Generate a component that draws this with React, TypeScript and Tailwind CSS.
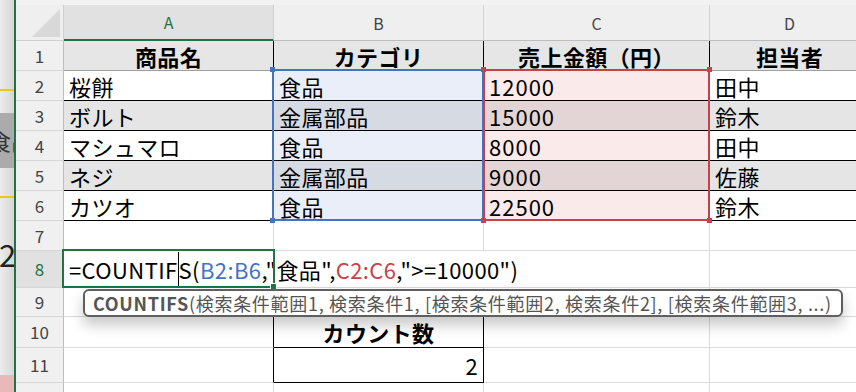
import type { ReactNode } from "react";

const colW = ["w-[210px]", "w-[210px]", "w-[226px]", "w-[160px]"];

const items = [
  { name: "桜餅", cat: "食品", amt: "12000", who: "田中" },
  { name: "ボルト", cat: "金属部品", amt: "15000", who: "鈴木" },
  { name: "マシュマロ", cat: "食品", amt: "8000", who: "田中" },
  { name: "ネジ", cat: "金属部品", amt: "9000", who: "佐藤" },
  { name: "カツオ", cat: "食品", amt: "22500", who: "鈴木" },
];

type CellSpec = { text?: ReactNode; cls: string };

const GRID = "bg-white border-r-[#dadada] border-b-[#dadada]";

function RowHead({ n, active }: { n: number; active?: boolean }) {
  return (
    <div
      className={`w-[48px] shrink-0 flex items-center justify-center border-r border-b border-r-[#bdbdbd] border-b-[#d6d6d6] text-[17px] leading-[20px] tracking-normal ${
        active ? "bg-[#e1e1e1] text-[#217346]" : "bg-[#f0f0f0] text-[#444]"
      }`}
    >
      {n}
    </div>
  );
}

function Row({ n, h, cells, active }: { n: number; h: string; cells: CellSpec[]; active?: boolean }) {
  return (
    <div className={`flex shrink-0 ${h}`}>
      <RowHead n={n} active={active} />
      {cells.map((c, i) => (
        <div
          key={i}
          className={`${colW[i]} shrink-0 flex items-center px-[5px] border-r border-b whitespace-nowrap overflow-hidden ${c.cls}`}
        >
          {c.text}
        </div>
      ))}
    </div>
  );
}

function LeftStrip() {
  return (
    <div className="w-[14px] shrink-0 relative overflow-hidden bg-gradient-to-r from-[#ececec] to-[#d6d6d6]">
      <div className="absolute top-[89px] left-0 w-full h-[2px] bg-[#f0c419]" />
      <div className="absolute top-[113px] left-0 w-full h-[55px] bg-[#ababab]">
        <span className="absolute top-[16px] left-[-11px] text-[22px] leading-none text-[#333] whitespace-nowrap">
          食品
        </span>
      </div>
      <div className="absolute top-[196px] left-0 w-full h-[2px] bg-[#f0c419]" />
      <span className="absolute top-[238px] left-[-1px] text-[31px] leading-none text-[#222]">2</span>
      <div className="absolute top-[375px] left-0 w-full h-[20px] bg-[#e8b9b9]" />
    </div>
  );
}

export default function App() {
  const hdr = "bg-[#e6e6e6] font-bold justify-center border-r-black border-b-[#a0a0a0]";
  return (
    <div className="w-[856px] h-[392px] overflow-hidden flex bg-white text-black text-[22px] leading-[26px] tracking-[0.4px] font-['Noto_Sans_CJK_JP','Noto_Sans',sans-serif]">
      <LeftStrip />
      <div className="w-[2px] shrink-0 bg-[#217346]" />
      <div className="relative flex-1 flex flex-col overflow-hidden">
        <div className="h-[5px] shrink-0 bg-[#f2f2f2]" />
        <div className="flex h-[36px] shrink-0 text-[16px] leading-[20px] tracking-normal">
          <div className="w-[48px] shrink-0 bg-[#efefef] border-r border-b border-[#cfcfcf] flex items-end justify-end p-[3px]">
            <svg width="28" height="28" viewBox="0 0 28 28">
              <polygon points="28,0 28,28 0,28" fill="#d8d8d8" />
            </svg>
          </div>
          <div className="w-[210px] shrink-0 bg-[#e1e1e1] border-r border-r-[#d0d0d0] border-b-2 border-b-[#217346] flex items-center justify-center text-[#217346]">
            A
          </div>
          {["B", "C", "D"].map((l, i) => (
            <div
              key={l}
              className={`${colW[i + 1]} shrink-0 bg-[#efefef] border-r border-b border-r-[#d4d4d4] border-b-[#bdbdbd] flex items-center justify-center text-[#444]`}
            >
              {l}
            </div>
          ))}
        </div>

        <Row
          n={1}
          h="h-[30px]"
          cells={[
            { text: "商品名", cls: hdr },
            { text: "カテゴリ", cls: hdr },
            { text: "売上金額（円）", cls: hdr },
            { text: "担当者", cls: hdr },
          ]}
        />
        {items.map((it, i) => {
          const g = i % 2 === 1;
          const line = "border-r-black border-b-black";
          return (
            <Row
              key={it.name}
              n={i + 2}
              h="h-[30px]"
              cells={[
                { text: it.name, cls: `${g ? "bg-[#e5e5e5]" : "bg-white"} ${line}` },
                { text: it.cat, cls: `${g ? "bg-[#d6dae3]" : "bg-[#e9eef8]"} ${line}` },
                { text: it.amt, cls: `${g ? "bg-[#e3d5d5]" : "bg-[#fbeaea]"} tracking-[1px] ${line}` },
                { text: it.who, cls: `${g ? "bg-[#e5e5e5]" : "bg-white"} ${line}` },
              ]}
            />
          );
        })}
        <Row n={7} h="h-[30px]" cells={[{ cls: GRID }, { cls: GRID }, { cls: GRID }, { cls: GRID }]} />

        <div className="flex h-[37px] shrink-0">
          <RowHead n={8} active />
          <div className="w-[646px] shrink-0 flex items-center pl-[5px] border-r border-b border-[#dadada] whitespace-nowrap">
            <span>=COUNTIF</span>
            <span className="inline-block w-px h-[35px] bg-black" />
            <span>S(</span>
            <span className="text-[#4472c4]">B2:B6</span>
            <span>,"食品",</span>
            <span className="text-[#c8404a]">C2:C6</span>
            <span>,"&gt;=10000")</span>
          </div>
          <div className="w-[160px] shrink-0 border-r border-b border-[#dadada]" />
        </div>

        <Row
          n={9}
          h="h-[29px]"
          cells={[
            { cls: GRID },
            { cls: "bg-white border-r-[#dadada] border-b-black" },
            { cls: GRID },
            { cls: GRID },
          ]}
        />
        <Row
          n={10}
          h="h-[31px]"
          cells={[
            { cls: "bg-white border-r-black border-b-[#dadada]" },
            { text: "カウント数", cls: "bg-white font-bold justify-center border-r-black border-b-black" },
            { cls: GRID },
            { cls: GRID },
          ]}
        />
        <Row
          n={11}
          h="h-[35px]"
          cells={[
            { cls: "bg-white border-r-black border-b-[#dadada]" },
            { text: "2", cls: "bg-white justify-end border-r-black border-b-black" },
            { cls: GRID },
            { cls: GRID },
          ]}
        />
        <Row n={12} h="h-[30px]" cells={[{ cls: GRID }, { cls: GRID }, { cls: GRID }, { cls: GRID }]} />

        {/* reference ranges */}
        <div className="absolute left-[256px] top-[69px] w-[212px] h-[152px] border-2 border-[#4472c4]" />
        <div className="absolute left-[467px] top-[69px] w-[227px] h-[152px] border-2 border-[#c8404a]" />
        <div className="absolute left-[254px] top-[67px] w-[5px] h-[5px] bg-[#4472c4]" />
        <div className="absolute left-[254px] top-[218px] w-[5px] h-[5px] bg-[#4472c4]" />
        <div className="absolute left-[465px] top-[67px] w-[5px] h-[5px] bg-[#c8404a]" />
        <div className="absolute left-[465px] top-[218px] w-[5px] h-[5px] bg-[#c8404a]" />
        <div className="absolute left-[691px] top-[67px] w-[5px] h-[5px] bg-[#c8404a]" />
        <div className="absolute left-[691px] top-[218px] w-[5px] h-[5px] bg-[#c8404a]" />

        {/* active cell */}
        <div className="absolute left-[46px] top-[249px] w-[213px] h-[39px] border-2 border-[#217346]" />
        <div className="absolute left-[254px] top-[283px] w-[7px] h-[7px] bg-[#217346] border border-white" />

        {/* formula tooltip */}
        <div className="absolute left-[67px] top-[289px] w-[760px] h-[28px] bg-white border-2 border-[#5f5f5f] rounded-[6px] shadow-[0_8px_14px_rgba(0,0,0,0.22)] flex items-center pl-[8px] text-[18px] leading-[22px] tracking-[0.7px] text-[#555] whitespace-nowrap">
          <span className="font-bold">COUNTIFS</span>
          <span>(検索条件範囲1, 検索条件1, [検索条件範囲2, 検索条件2], [検索条件範囲3, ...)</span>
        </div>
      </div>
    </div>
  );
}
